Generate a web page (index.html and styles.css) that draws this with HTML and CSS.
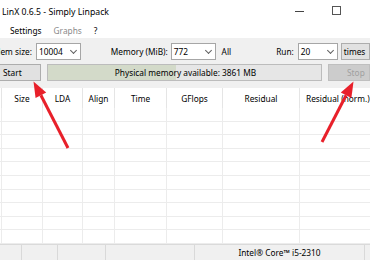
FILE: index.html
```html
<!DOCTYPE html>
<html lang="en">
<head>
<meta charset="utf-8">
<title>LinX 0.6.5 - Simply Linpack</title>
<link rel="stylesheet" href="styles.css">
</head>
<body>
<div class="window">
  <header class="titlebar">
    <span class="title">LinX 0.6.5 - Simply Linpack</span>
    <div class="controls">
      <span class="btn-min"></span>
      <span class="btn-max"></span>
    </div>
  </header>

  <nav class="menubar">
    <span class="menu-item">Settings</span>
    <span class="menu-item disabled">Graphs</span>
    <span class="menu-item">?</span>
  </nav>

  <section class="toolbar">
    <div class="tool-row">
      <label class="field-label clipped">Problem size:</label>
      <div class="combo combo-size"><span>10004</span><i class="chev"></i></div>
      <label class="field-label mem-label">Memory (MiB):</label>
      <div class="combo combo-mem"><span>772</span><i class="chev"></i></div>
      <span class="field-label all-label">All</span>
      <label class="field-label run-label">Run:</label>
      <div class="combo combo-run"><span>20</span><i class="chev"></i></div>
      <button class="btn btn-times">times</button>
    </div>
    <div class="tool-row">
      <button class="btn btn-start">Start</button>
      <div class="progress">
        <div class="progress-fill" style="width: 47%"></div>
        <span class="progress-text">Physical memory available: 3861 MB</span>
      </div>
      <button class="btn btn-stop" disabled>Stop</button>
    </div>
  </section>

  <div class="grid">
    <div class="grid-head">
      <div class="cell"></div>
      <div class="cell">Size</div>
      <div class="cell">LDA</div>
      <div class="cell">Align</div>
      <div class="cell">Time</div>
      <div class="cell">GFlops</div>
      <div class="cell">Residual</div>
      <div class="cell last">Residual (norm.)</div>
    </div>
    <div class="grid-body" id="grid-body"></div>
  </div>

  <footer class="statusbar">
    <div class="status-cell"></div>
    <div class="status-cell"></div>
    <div class="status-cell"></div>
    <div class="status-cell"></div>
    <div class="status-cell">Intel® Core™ i5-2310</div>
    <div class="status-cell"></div>
  </footer>

  <svg class="arrows" width="370" height="260" viewBox="0 0 370 260">
    <line x1="68" y1="148" x2="40.9" y2="95.3" class="arrow-line"/>
    <polygon points="33.5,81.5 46.2,92.6 35.6,98" class="arrow-head"/>
    <line x1="322" y1="142" x2="346.1" y2="95.3" class="arrow-line"/>
    <polygon points="353.5,81.5 351.4,98.1 340.8,92.6" class="arrow-head"/>
  </svg>
</div>

<script>
  // empty result rows
  const body = document.getElementById('grid-body');
  for (let r = 0; r < 10; r++) {
    const row = document.createElement('div');
    row.className = 'grid-row';
    for (let c = 0; c < 8; c++) {
      const cell = document.createElement('div');
      cell.className = 'cell';
      row.appendChild(cell);
    }
    body.appendChild(row);
  }
</script>
</body>
</html>
```

FILE: styles.css
```css
html, body {
  margin: 0;
  padding: 0;
}
body {
  width: 370px;
  height: 260px;
  overflow: hidden;
  background: #fff;
  font-family: "Noto Sans", "Liberation Sans", Arial, sans-serif;
  font-size: 8.3px;
  color: #000;
}
.window {
  position: relative;
  width: 370px;
  height: 260px;
  display: flex;
  flex-direction: column;
  overflow: hidden;
}

/* title bar */
.titlebar {
  height: 23px;
  display: flex;
  align-items: center;
  padding-left: 2px;
  background: #fff;
}
.title {
  flex: 1;
  font-size: 8.7px;
}
.controls {
  display: flex;
  align-items: center;
  gap: 28px;
  padding-right: 29px;
}
.btn-min {
  width: 9px;
  height: 1px;
  background: #444;
}
.btn-max {
  width: 7px;
  height: 7px;
  border: 1px solid #555;
  margin-bottom: 2px;
}

/* menu */
.menubar {
  height: 15px;
  display: flex;
  align-items: center;
  gap: 12px;
  padding-left: 10px;
}
.menu-item.disabled {
  color: #8a8a8a;
}

/* toolbar */
.toolbar {
  background: #f0f0f0;
  height: 50px;
  box-sizing: border-box;
  padding-top: 5px;
  display: flex;
  flex-direction: column;
  gap: 4px;
}
.tool-row {
  display: flex;
  align-items: center;
  height: 17px;
}
.field-label {
  white-space: nowrap;
}
.clipped {
  width: 33px;
  display: flex;
  justify-content: flex-end;
  overflow: hidden;
  margin-right: 4px;
}
.mem-label { margin-left: 30px; margin-right: 3px; }
.all-label { margin-left: 6px; }
.run-label { margin-left: 45px; margin-right: 4px; }

.combo {
  height: 17px;
  box-sizing: border-box;
  background: #fff;
  border: 1px solid #a6a6a6;
  display: flex;
  align-items: center;
  justify-content: space-between;
  padding: 0 4px 0 2px;
}
.combo-size { width: 46px; }
.combo-mem { width: 46px; }
.combo-run { width: 41px; }
.chev {
  width: 4px;
  height: 4px;
  border-right: 1px solid #606060;
  border-bottom: 1px solid #606060;
  transform: rotate(45deg);
  margin-bottom: 3px;
}

.btn {
  font: inherit;
  height: 17px;
  box-sizing: border-box;
  background: #e1e1e1;
  border: 1px solid #adadad;
  padding: 0;
  color: #000;
}
.btn-times {
  margin-left: 3px;
  width: 30px;
  text-align: left;
  padding-left: 2px;
}
.btn-start {
  width: 42px;
  text-align: left;
  padding-left: 3px;
  margin-left: -1px;
}
.btn-stop {
  width: 42px;
  margin-left: 6px;
  background: #cccccc;
  border-color: #bfbfbf;
  color: #a0a0a0;
  text-align: left;
  padding-left: 18px;
}

.progress {
  position: relative;
  margin-left: 6px;
  width: 276px;
  height: 17px;
  box-sizing: border-box;
  border: 1px solid #bcbcbc;
  background: #e6e6e6;
  display: flex;
  align-items: center;
  justify-content: center;
  overflow: hidden;
}
.progress-fill {
  position: absolute;
  left: 0;
  top: 0;
  bottom: 0;
  background: #d3dac9;
}
.progress-text {
  position: relative;
  margin-left: 2px;
}

/* results grid */
.grid {
  flex: 1;
  background: #fff;
  overflow: hidden;
}
.grid-head,
.grid-row {
  display: grid;
  grid-template-columns: 2px 41px 40px 32px 52px 56px 77px 76px;
}
.grid-head {
  height: 20px;
}
.grid-head .cell {
  display: flex;
  align-items: center;
  justify-content: center;
  border-right: 1px solid #e5e5e5;
  white-space: nowrap;
}
.grid-head .cell.last {
  justify-content: flex-start;
  padding-left: 6px;
}
.grid-row {
  height: 13.6px;
  box-sizing: border-box;
  border-bottom: 1px solid #ececec;
}
.grid-row .cell {
  border-right: 1px solid #ececec;
}

/* status bar */
.statusbar {
  height: 16px;
  box-sizing: border-box;
  border-top: 1px solid #dadada;
  background: #f0f0f0;
  display: grid;
  grid-template-columns: 22px 36px 48px 89px 170px 20px;
}
.status-cell {
  border-right: 1px solid #d9d9d9;
  display: flex;
  align-items: center;
  justify-content: center;
  white-space: nowrap;
}

/* annotation arrows */
.arrows {
  position: absolute;
  left: 0;
  top: 0;
  pointer-events: none;
}
.arrow-line {
  stroke: #e8202a;
  stroke-width: 3;
}
.arrow-head {
  fill: #e8202a;
}
```
